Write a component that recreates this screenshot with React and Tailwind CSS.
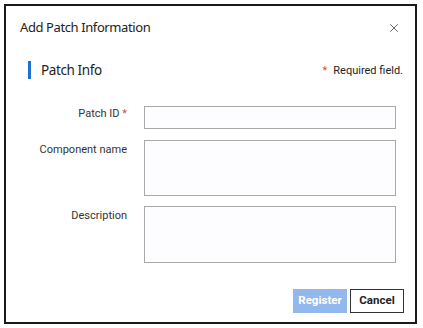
import { X } from "lucide-react";

export default function App() {
  return (
    <div className="h-[328px] w-[423px] bg-white pl-1 pt-1">
      <div
        className="flex h-[320px] w-[413px] flex-col border-2 border-[#1a1a1a] bg-white"
        style={{ fontFamily: "Roboto, sans-serif" }}
      >
        {/* Header */}
        <div className="flex items-center justify-between pl-[14px] pr-[14px] pt-[12px]">
          <h1
            className="text-[13px] leading-[18px] tracking-[-0.4px] text-[#222]"
            style={{ fontFamily: "'Noto Sans', sans-serif" }}
          >
            Add Patch Information
          </h1>
          <X size={14} strokeWidth={1.5} className="mt-[2px] text-[#555]" />
        </div>

        {/* Section */}
        <div className="mt-[25px] flex items-center justify-between pl-[22px] pr-[12px]">
          <div className="flex items-center gap-[10px]">
            <div className="h-[18px] w-[3px] bg-[#1a6fd8]" />
            <span
              className="text-[13.5px] leading-[18px] tracking-[-0.4px] text-[#222]"
              style={{ fontFamily: "'Noto Sans', sans-serif" }}
            >
              Patch Info
            </span>
          </div>
          <div className="mt-[2px] text-[11px] text-[#222]">
            <span className="mr-[6px] text-[#e04a3a]">*</span>
            Required field.
          </div>
        </div>

        {/* Form */}
        <div className="mt-[26px] flex flex-col pr-[19px]">
          <div className="flex">
            <label className="w-[121px] pt-0 text-right text-[11px] text-[#333]">
              Patch ID <span className="text-[#e04a3a]">*</span>
            </label>
            <input className="ml-[17px] h-[23px] flex-1 border border-[#a9a9a9] bg-[#fdfcfe] outline-none" />
          </div>
          <div className="mt-[11px] flex">
            <label className="w-[121px] pt-[2px] text-right text-[11px] text-[#333]">
              Component name
            </label>
            <textarea className="ml-[17px] h-[56px] flex-1 resize-none border border-[#a9a9a9] bg-[#fdfcfe] outline-none" />
          </div>
          <div className="mt-[10px] flex">
            <label className="w-[121px] pt-[2px] text-right text-[11px] text-[#333]">
              Description
            </label>
            <textarea className="ml-[17px] h-[57px] flex-1 resize-none border border-[#a9a9a9] bg-[#fdfcfe] outline-none" />
          </div>
        </div>

        {/* Footer */}
        <div className="mt-[26px] flex justify-end gap-[3px] pr-[11px]">
          <button className="h-[24px] w-[54px] bg-[#93b8ee] text-[11.5px] font-bold text-white">
            Register
          </button>
          <button className="h-[24px] w-[54px] border border-[#333] bg-white text-[11.5px] font-bold text-[#222]">
            Cancel
          </button>
        </div>
      </div>
    </div>
  );
}
